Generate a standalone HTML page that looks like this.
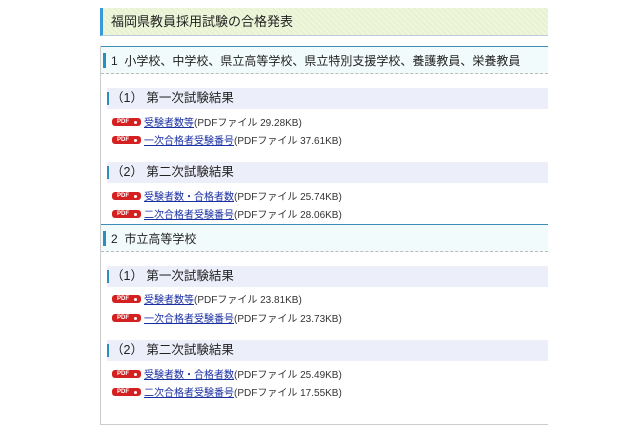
<!DOCTYPE html>
<html><head><meta charset="utf-8"><style>
body{margin:0;width:640px;height:426px;background:#fff;position:relative;overflow:hidden;font-family:"Liberation Sans","Noto Sans CJK JP",sans-serif;color:#222}
.a{position:absolute}
.title{left:100px;top:8px;width:448px;height:28px;background:repeating-linear-gradient(45deg,#eef6dc 0 2px,#e8f2d2 2px 4px);border-left:3px solid #3a9ad9;border-bottom:1px solid #bcd;box-sizing:border-box;font-size:13px;line-height:28px;padding-left:8px}
.frame{left:100px;top:46px;width:448px;height:379px;border-left:1px solid #ccc;border-bottom:1px solid #ccc;box-sizing:border-box}
.sec{left:101px;width:447px;height:28px;background:#f2fbfb;border-top:1px solid #3d8fb8;border-bottom:1px dashed #bbb;font-size:12px;line-height:28px;padding-left:10px;box-sizing:border-box;white-space:nowrap}
.sec:before{content:"";position:absolute;left:2px;top:6px;width:3px;height:15px;background:#2a8fc0}
.sub{left:107px;width:441px;height:21px;background:#eceefa;font-size:12.5px;line-height:21px;padding-left:4px;box-sizing:border-box;white-space:nowrap}
.sub:before{content:"";position:absolute;left:0;top:4px;width:2px;height:13px;background:#2a8fc0}
.ln{left:112px;font-size:10px;line-height:12px;white-space:nowrap;color:#333}
.pdf{display:inline-block;width:29px;height:8px;background:#d42020;border-radius:3px;vertical-align:0px;margin-right:3px;position:relative;overflow:hidden}
.pdf b{position:absolute;left:5px;top:0;color:#fff;font-size:6px;line-height:8px;font-family:"Liberation Sans",sans-serif}
.pdf:after{content:"";position:absolute;right:4px;top:2.5px;width:3px;height:3px;border-radius:50%;background:#fff}
a{color:#1a2fa0;text-decoration:underline}
</style></head><body>
<div class="a title">福岡県教員採用試験の合格発表</div>
<div class="a frame"></div>
<div class="a sec" style="top:46px">1&nbsp; 小学校、中学校、県立高等学校、県立特別支援学校、養護教員、栄養教員</div>
<div class="a sub" style="top:88px">（1） 第一次試験結果</div>
<div class="a ln" style="top:118px"><span class="pdf"><b>PDF</b></span><a>受験者数等</a>(PDFファイル 29.28KB)</div>
<div class="a ln" style="top:136px"><span class="pdf"><b>PDF</b></span><a>一次合格者受験番号</a>(PDFファイル 37.61KB)</div>
<div class="a sub" style="top:162px">（2） 第二次試験結果</div>
<div class="a ln" style="top:192px"><span class="pdf"><b>PDF</b></span><a>受験者数・合格者数</a>(PDFファイル 25.74KB)</div>
<div class="a ln" style="top:210px"><span class="pdf"><b>PDF</b></span><a>二次合格者受験番号</a>(PDFファイル 28.06KB)</div>
<div class="a sec" style="top:224px">2&nbsp; 市立高等学校</div>
<div class="a sub" style="top:266px">（1） 第一次試験結果</div>
<div class="a ln" style="top:295px"><span class="pdf"><b>PDF</b></span><a>受験者数等</a>(PDFファイル 23.81KB)</div>
<div class="a ln" style="top:314px"><span class="pdf"><b>PDF</b></span><a>一次合格者受験番号</a>(PDFファイル 23.73KB)</div>
<div class="a sub" style="top:340px">（2） 第二次試験結果</div>
<div class="a ln" style="top:370px"><span class="pdf"><b>PDF</b></span><a>受験者数・合格者数</a>(PDFファイル 25.49KB)</div>
<div class="a ln" style="top:388px"><span class="pdf"><b>PDF</b></span><a>二次合格者受験番号</a>(PDFファイル 17.55KB)</div>
</body></html>
